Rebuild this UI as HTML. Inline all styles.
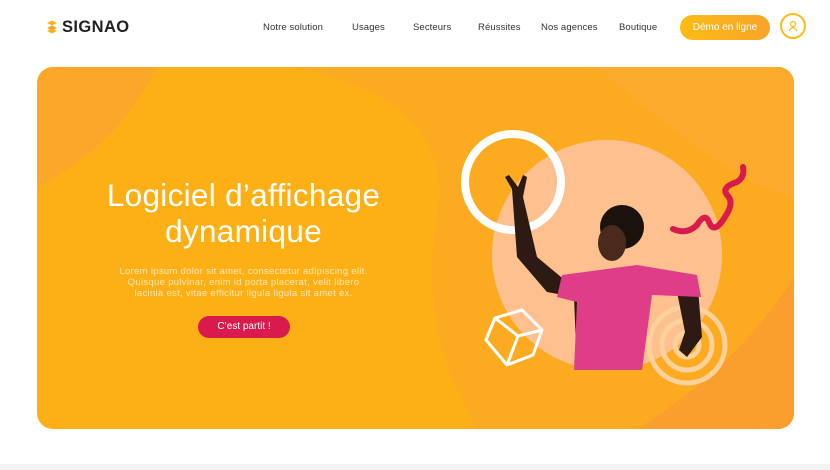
<!DOCTYPE html>
<html><head><meta charset="utf-8"><style>
*{margin:0;padding:0;box-sizing:border-box}
body{width:830px;height:470px;background:#fff;font-family:"Liberation Sans",sans-serif;position:relative;overflow:hidden}
.nav a{position:absolute;top:22px;font-size:9.5px;color:#333;letter-spacing:.1px}
.card{position:absolute;left:37px;top:67px;width:757px;height:362px;border-radius:16px;overflow:hidden;background:#fdb016}
</style></head><body>
<svg style="position:absolute;left:46px;top:20px" width="12" height="14" viewBox="0 0 12 14"><path d="M1 3 L6 0.5 L11 3 L6 5.5Z" fill="#fbb316"/><path d="M1 8 L6 5.5 L11 8 L6 10.5Z" fill="#f7a125"/><path d="M1 11 L6 8.5 L11 11 L6 13.5Z" fill="#fbb316"/></svg>
<div style="position:absolute;left:62px;top:18px;font-size:16.5px;font-weight:bold;color:#222;letter-spacing:.4px">SIGNAO</div>
<div class="nav">
<a style="left:263px">Notre solution</a><a style="left:352px">Usages</a><a style="left:413px">Secteurs</a><a style="left:478px">Réussites</a><a style="left:541px">Nos agences</a><a style="left:619px">Boutique</a>
</div>
<div style="position:absolute;left:680px;top:15px;width:90px;height:25px;border-radius:13px;background:linear-gradient(90deg,#fcbb14,#f8a42a);color:#fff;font-size:10px;text-align:center;line-height:25px">Démo en ligne</div>
<div style="position:absolute;left:780px;top:13px;width:26px;height:26px;border-radius:50%;border:2px solid #fbbd14"></div>
<svg style="position:absolute;left:787px;top:20px" width="12" height="12" viewBox="0 0 12 12"><circle cx="6" cy="4" r="2.5" fill="none" stroke="#fbbd14" stroke-width="1.2"/><path d="M2 11 Q6 4 10 11" fill="none" stroke="#fbbd14" stroke-width="1.2"/></svg>
<div class="card">
<svg width="757" height="362" style="position:absolute;left:0;top:0">
<path d="M0 0 H120 Q80 80 0 120Z" fill="#fca62a"/>
<path d="M250 0 Q420 30 400 150 Q380 260 440 362 H757 V0Z" fill="#fca82a" opacity=".55"/>
<path d="M560 0 Q700 120 757 130 V0Z" fill="#fcab2c"/>
<path d="M600 362 Q700 300 757 210 V362Z" fill="#fa9e2e"/>
<circle cx="570" cy="188" r="115" fill="#fdc08e"/>
<circle cx="476" cy="115" r="48" fill="none" stroke="#fff" stroke-width="8"/>
<circle cx="650" cy="278" r="38" fill="none" stroke="#fdd19c" stroke-width="5"/>
<circle cx="650" cy="278" r="25" fill="none" stroke="#fdd19c" stroke-width="5"/>
<circle cx="650" cy="278" r="12" fill="none" stroke="#fdd19c" stroke-width="5"/>
<path d="M636 162 Q650 168 660 158 Q668 145 672 155 Q677 168 688 150 Q698 135 690 128 Q684 120 700 115 Q708 110 706 100" fill="none" stroke="#d81b4c" stroke-width="6" stroke-linecap="round" stroke-linejoin="round"/>
<path d="M449 273 L458 251 L485 243 L505 263 L496 288 L470 298Z M458 251 L481 269 L505 263 M481 269 L470 298" fill="none" stroke="#fff" stroke-width="3" stroke-linejoin="round"/>
<path d="M475 122 L468 110 L472 108 L481 120 L486 108 L490 110 L486 130 L500 190 L530 215 L600 200 L660 210 L665 270 L650 290 L642 283 L648 265 L640 225 L610 225 L600 300 L540 303 L537 230 L510 225 L480 190Z" fill="#2d1a12"/>
<path d="M525 208 L600 198 L660 208 L664 230 L615 228 L605 303 L537 303 L540 235 L520 230Z" fill="#df3d88"/>
<circle cx="585" cy="160" r="22" fill="#1c120d"/>
<ellipse cx="575" cy="176" rx="14" ry="18" fill="#4a2a1c"/>
</svg>
<div style="position:absolute;left:0;width:413px;top:110px;text-align:center;color:#fff;font-size:31.5px;line-height:36px;letter-spacing:.3px">Logiciel d’affichage<br>dynamique</div>
<div style="position:absolute;left:0;width:413px;top:199px;text-align:center;color:#fde6b5;font-size:9.5px;line-height:11px;letter-spacing:.3px">Lorem ipsum dolor sit amet, consectetur adipiscing elit.<br>Quisque pulvinar, enim id porta placerat, velit libero<br>lacinia est, vitae efficitur ligula ligula sit amet ex.</div>
<div style="position:absolute;left:161px;top:249px;width:92px;height:22px;border-radius:11px;background:#d81b4c;color:#fff;font-size:10px;text-align:center;line-height:22px">C’est partit !</div>
</div>
<div style="position:absolute;left:0;top:464px;width:830px;height:6px;background:#f3f3f3"></div>
</body></html>
